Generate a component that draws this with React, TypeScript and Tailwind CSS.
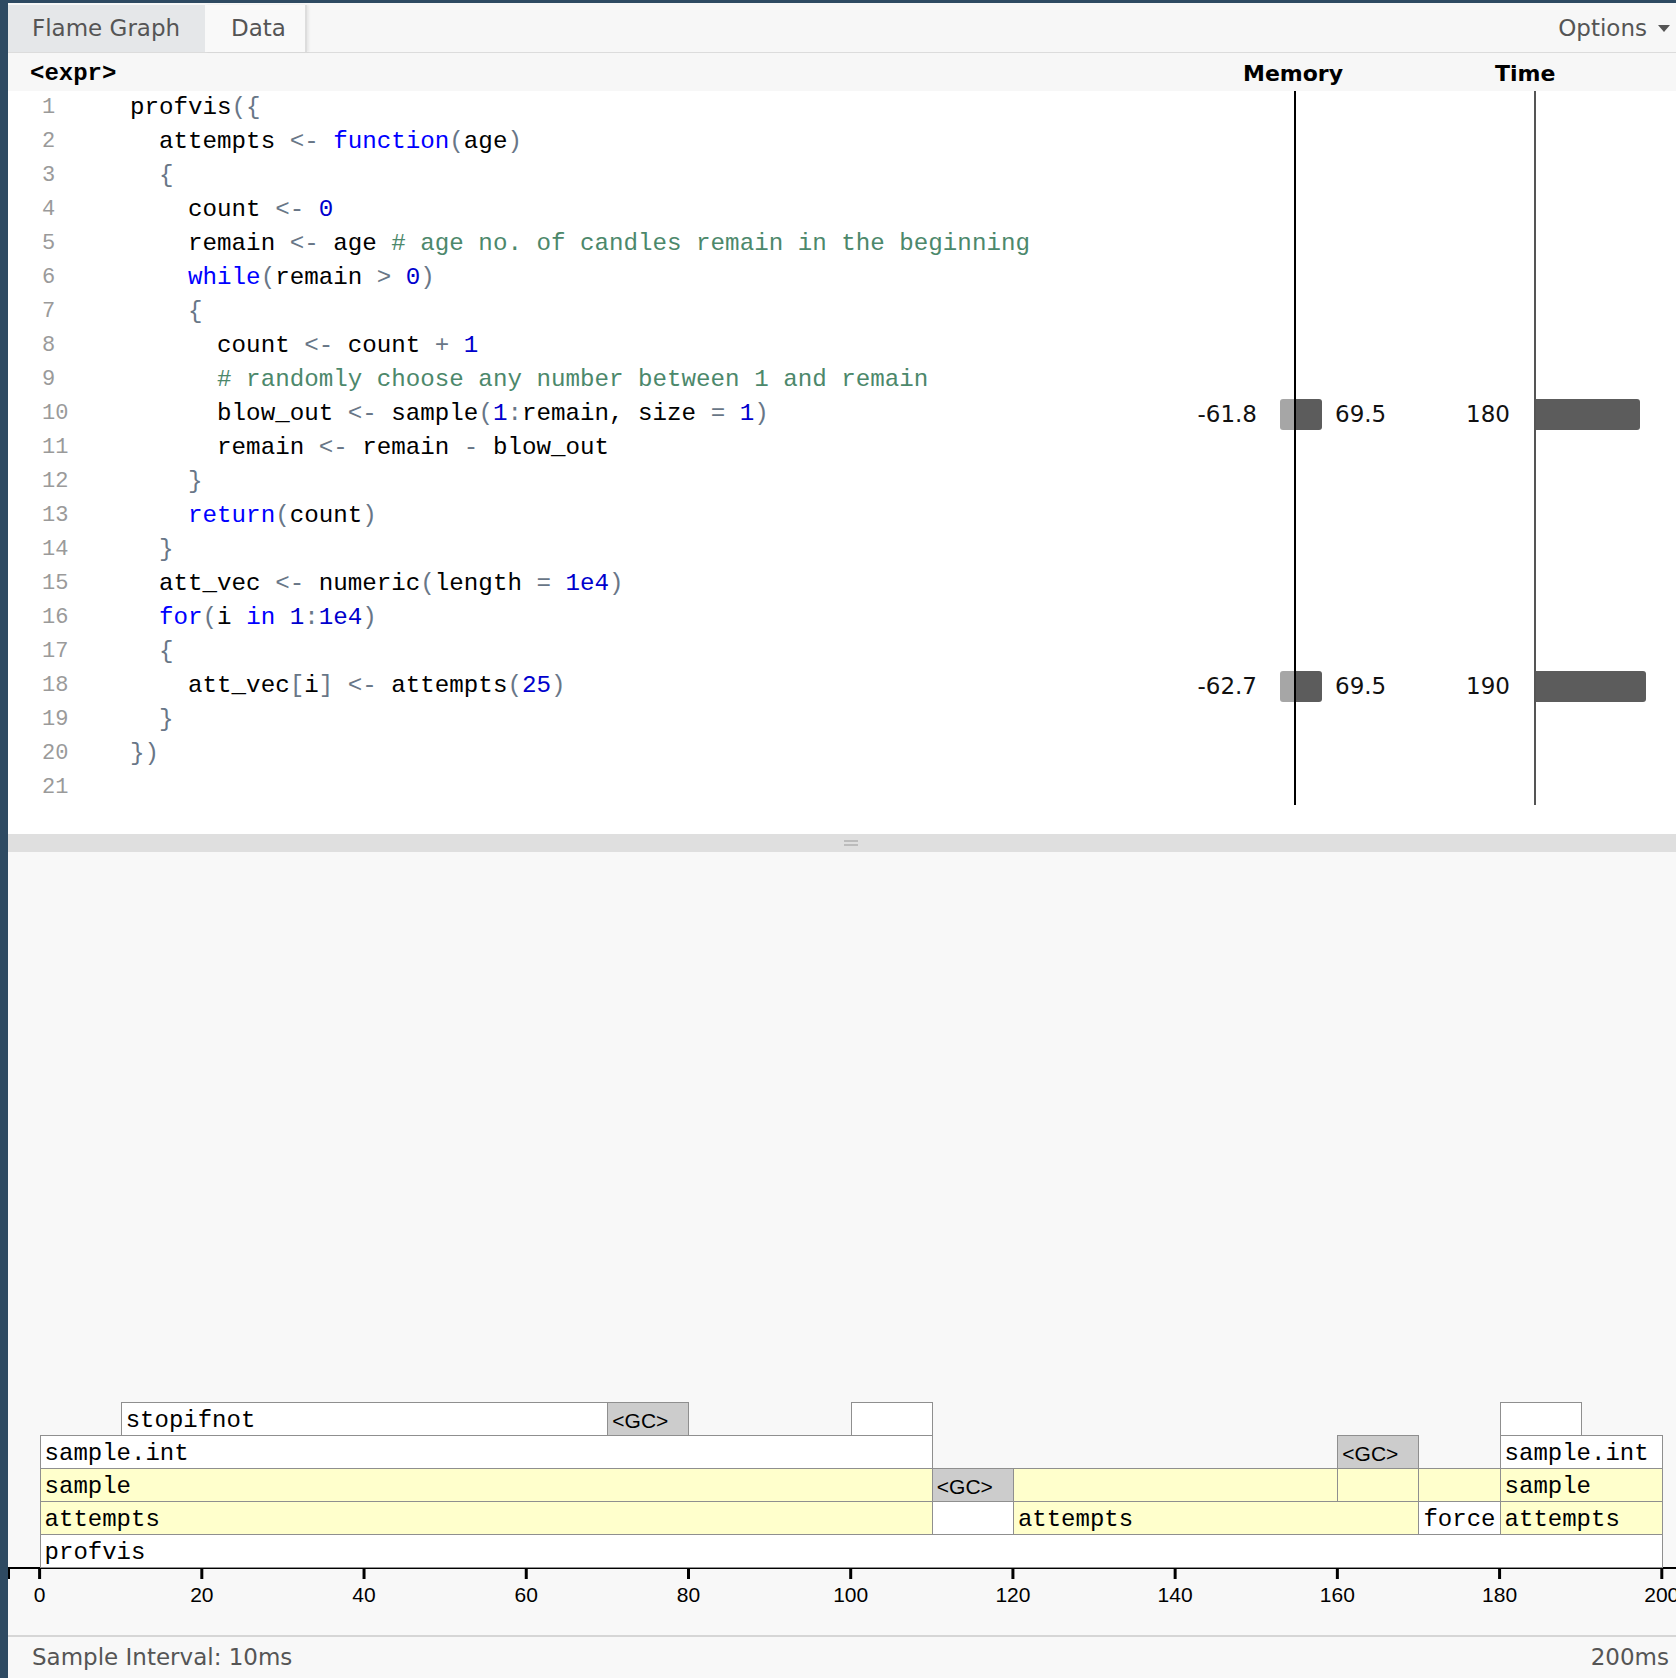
type Kind = "t" | "o" | "k" | "n" | "c";

type Token = [string, Kind];

const colors: Record<Kind, string> = {
  t: "text-black",
  o: "text-[#687687]",
  k: "text-[#0000ff]",
  n: "text-[#0000cd]",
  c: "text-[#4c886b]",
};

const code: Token[][] = [
  [["profvis", "t"], ["({", "o"]],
  [["  attempts ", "t"], ["<-", "o"], [" ", "t"], ["function", "k"], ["(", "o"], ["age", "t"], [")", "o"]],
  [["  ", "t"], ["{", "o"]],
  [["    count ", "t"], ["<-", "o"], [" ", "t"], ["0", "n"]],
  [["    remain ", "t"], ["<-", "o"], [" age ", "t"], ["# age no. of candles remain in the beginning", "c"]],
  [["    ", "t"], ["while", "k"], ["(", "o"], ["remain ", "t"], [">", "o"], [" ", "t"], ["0", "n"], [")", "o"]],
  [["    ", "t"], ["{", "o"]],
  [["      count ", "t"], ["<-", "o"], [" count ", "t"], ["+", "o"], [" ", "t"], ["1", "n"]],
  [["      ", "t"], ["# randomly choose any number between 1 and remain", "c"]],
  [["      blow_out ", "t"], ["<-", "o"], [" sample", "t"], ["(", "o"], ["1", "n"], [":", "o"], ["remain, size ", "t"], ["=", "o"], [" ", "t"], ["1", "n"], [")", "o"]],
  [["      remain ", "t"], ["<-", "o"], [" remain ", "t"], ["-", "o"], [" blow_out", "t"]],
  [["    ", "t"], ["}", "o"]],
  [["    ", "t"], ["return", "k"], ["(", "o"], ["count", "t"], [")", "o"]],
  [["  ", "t"], ["}", "o"]],
  [["  att_vec ", "t"], ["<-", "o"], [" numeric", "t"], ["(", "o"], ["length ", "t"], ["=", "o"], [" ", "t"], ["1e4", "n"], [")", "o"]],
  [["  ", "t"], ["for", "k"], ["(", "o"], ["i ", "t"], ["in", "k"], [" ", "t"], ["1", "n"], [":", "o"], ["1e4", "n"], [")", "o"]],
  [["  ", "t"], ["{", "o"]],
  [["    att_vec", "t"], ["[", "o"], ["i", "t"], ["]", "o"], [" ", "t"], ["<-", "o"], [" attempts", "t"], ["(", "o"], ["25", "n"], [")", "o"]],
  [["  ", "t"], ["}", "o"]],
  [["})", "o"]],
  [],
];

interface Stat {
  memNeg: string;
  memPos: string;
  time: string;
  timeWidth: number;
}

const stats: Record<number, Stat> = {
  10: { memNeg: "-61.8", memPos: "69.5", time: "180", timeWidth: 104 },
  18: { memNeg: "-62.7", memPos: "69.5", time: "190", timeWidth: 110 },
};

interface Cell {
  row: number;
  start: number;
  end: number;
  label: string;
  fill: "white" | "yellow" | "gc";
}

const cells: Cell[] = [
  { row: 0, start: 0, end: 200, label: "profvis", fill: "white" },
  { row: 1, start: 0, end: 110, label: "attempts", fill: "yellow" },
  { row: 1, start: 110, end: 120, label: "", fill: "white" },
  { row: 1, start: 120, end: 170, label: "attempts", fill: "yellow" },
  { row: 1, start: 170, end: 180, label: "force", fill: "white" },
  { row: 1, start: 180, end: 200, label: "attempts", fill: "yellow" },
  { row: 2, start: 0, end: 110, label: "sample", fill: "yellow" },
  { row: 2, start: 110, end: 120, label: "<GC>", fill: "gc" },
  { row: 2, start: 120, end: 160, label: "", fill: "yellow" },
  { row: 2, start: 160, end: 170, label: "", fill: "yellow" },
  { row: 2, start: 170, end: 180, label: "", fill: "yellow" },
  { row: 2, start: 180, end: 200, label: "sample", fill: "yellow" },
  { row: 3, start: 0, end: 110, label: "sample.int", fill: "white" },
  { row: 3, start: 160, end: 170, label: "<GC>", fill: "gc" },
  { row: 3, start: 180, end: 200, label: "sample.int", fill: "white" },
  { row: 4, start: 10, end: 70, label: "stopifnot", fill: "white" },
  { row: 4, start: 70, end: 80, label: "<GC>", fill: "gc" },
  { row: 4, start: 100, end: 110, label: "", fill: "white" },
  { row: 4, start: 180, end: 190, label: "", fill: "white" },
];

const fills = {
  white: "bg-white",
  yellow: "bg-[#ffffcc]",
  gc: "bg-[#cccccc]",
};

const x0 = 31.6;
const pxPerMs = 8.111;
const ticks = [0, 20, 40, 60, 80, 100, 120, 140, 160, 180, 200];

function CodeRow({ num, tokens }: { num: number; tokens: Token[] }) {
  const stat = stats[num];

  return (
    <div className="flex h-[34px] leading-[34px]">
      <div className="w-[122px] pl-[34px] text-[22px] text-[#9a9a9a] font-['Liberation_Mono',monospace]">
        {num}
      </div>
      <div className="w-[970px] whitespace-pre text-[24.2px] font-['Liberation_Mono',monospace]">
        {tokens.map(([text, kind], i) => (
          <span key={i} className={colors[kind]}>
            {text}
          </span>
        ))}
      </div>

      <div className="flex w-[320px] text-[23px] text-[#111] font-['DejaVu_Sans',sans-serif]">
        <div className="flex w-[196px] items-center justify-end border-r-2 border-black">
          {stat && (
            <>
              <span>{stat.memNeg}</span>
              <div className="ml-[23px] h-[31px] w-[14px] rounded-l-[3px] bg-[#a6a6a6]" />
            </>
          )}
        </div>
        <div className="flex flex-1 items-center">
          {stat && (
            <>
              <div className="h-[31px] w-[26px] rounded-r-[3px] bg-[#5c5c5c]" />
              <span className="ml-[13px]">{stat.memPos}</span>
            </>
          )}
        </div>
      </div>

      <div className="flex flex-1 text-[23px] text-[#111] font-['DejaVu_Sans',sans-serif]">
        <div className="flex w-[116px] items-center justify-end border-r-2 border-[#555] pr-[24px]">
          {stat && <span>{stat.time}</span>}
        </div>
        <div className="flex flex-1 items-center">
          {stat && (
            <div
              className="h-[31px] rounded-r-[3px] bg-[#5c5c5c]"
              style={{ width: stat.timeWidth }}
            />
          )}
        </div>
      </div>
    </div>
  );
}

function FlameGraph() {
  return (
    <div className="relative h-[165px]">
      {cells.map((cell, i) => (
        <div
          key={i}
          className={`absolute overflow-hidden whitespace-pre border border-[#8f8f8f] pl-[4px] pt-[3px] leading-[30px] text-black ${fills[cell.fill]} ${
            cell.fill === "gc"
              ? "text-[21px] font-['Liberation_Sans',sans-serif]"
              : "text-[24px] font-['Liberation_Mono',monospace]"
          }`}
          style={{
            left: x0 + cell.start * pxPerMs,
            width: (cell.end - cell.start) * pxPerMs + 1,
            top: (4 - cell.row) * 33,
            height: 34,
          }}
        >
          {cell.label}
        </div>
      ))}
    </div>
  );
}

function Axis() {
  return (
    <svg width="1668" height="68" className="block overflow-hidden">
      <path d="M1,12 V1 H1668" fill="none" stroke="#000" strokeWidth="2" />
      {ticks.map((t) => {
        const x = x0 + t * pxPerMs;
        return (
          <g key={t}>
            <line x1={x} x2={x} y1={1} y2={12} stroke="#000" strokeWidth="3" />
            <text
              x={x}
              y={35}
              textAnchor="middle"
              fontSize="21"
              fontFamily="'Liberation Sans', sans-serif"
              fill="#000"
            >
              {t}
            </text>
          </g>
        );
      })}
    </svg>
  );
}

function App() {
  return (
    <div className="h-[1678px] w-[1676px] overflow-hidden border-l-[8px] border-t-[3px] border-[#2e4a62] bg-[#f8f8f8]">
      <div className="flex h-[50px] items-stretch border-b border-[#dcdcdc] bg-[#f7f7f7] pt-[2px] text-[23px] text-[#555] font-['DejaVu_Sans',sans-serif]">
        <div className="flex w-[197px] items-center bg-[#e5e7e9] pl-[24px]">
          Flame Graph
        </div>
        <div className="flex w-[102px] items-center border-r-2 border-[#dddddd] bg-[#f9f9f9] pl-[26px] shadow-[2px_0_2px_rgba(0,0,0,0.06)]">
          Data
        </div>
        <div className="flex-1" />
        <div className="flex items-center gap-[11px] pr-[6px]">
          <span>Options</span>
          <span className="h-0 w-0 border-x-[6px] border-t-[7px] border-x-transparent border-t-[#555]" />
        </div>
      </div>

      <div className="flex h-[38px] items-center bg-[#f7f7f7] pt-[3px] text-black">
        <div className="w-[1092px] pl-[22px] text-[24px] font-bold font-['Liberation_Mono',monospace]">
          {"<expr>"}
        </div>
        <div className="w-[320px] pl-[143px] text-[22px] font-bold font-['DejaVu_Sans',sans-serif]">
          Memory
        </div>
        <div className="flex-1 pl-[75px] text-[22px] font-bold font-['DejaVu_Sans',sans-serif]">
          Time
        </div>
      </div>

      <div className="bg-white">
        {code.map((tokens, i) => (
          <CodeRow key={i} num={i + 1} tokens={tokens} />
        ))}
        <div className="h-[29px]" />
      </div>

      <div className="flex h-[18px] flex-col items-center justify-center gap-[2px] bg-[#dfdfdf] pl-[18px]">
        <div className="h-[2px] w-[14px] bg-[#bcbcbc]" />
        <div className="h-[2px] w-[14px] bg-[#bcbcbc]" />
      </div>

      <div className="flex h-[783px] flex-col justify-end">
        <FlameGraph />
        <Axis />
      </div>

      <div className="flex h-[43px] items-center justify-between border-t-2 border-[#d6d6d6] pl-[24px] pr-[7px] text-[23px] text-[#555] font-['DejaVu_Sans',sans-serif]">
        <span>Sample Interval: 10ms</span>
        <span>200ms</span>
      </div>
    </div>
  );
}

export default App;
